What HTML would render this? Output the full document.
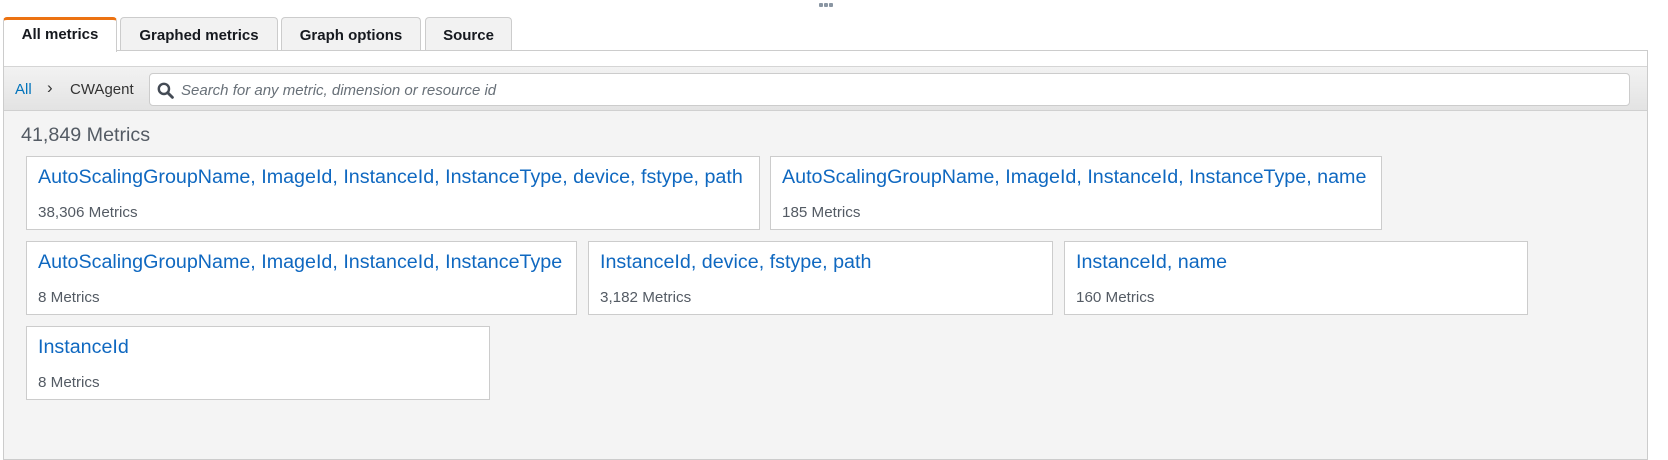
<!DOCTYPE html>
<html><head><meta charset="utf-8"><style>
*{box-sizing:border-box;margin:0;padding:0}
body{width:1668px;height:454px;background:#fff;position:relative;overflow:hidden;font-family:"Liberation Sans",sans-serif;}
.abs{position:absolute}
.dots{left:819px;top:3px;width:14px;height:4px;display:flex;gap:1px}
.dots i{display:block;width:4px;height:4px;background:#8a96a3;border-radius:1px}
.tab{position:absolute;top:17px;height:34px;background:#f2f2f2;border:1px solid #ccc;border-bottom:none;border-radius:4px 4px 0 0;font-weight:bold;font-size:15px;color:#16191f;text-align:center;line-height:31px;padding-top:2px}
.tab.act{background:#fff;border-top:3px solid #ec7211;height:35px;line-height:30px;z-index:2;padding-top:0}
.panel{left:3px;top:50px;width:1645px;height:410px;border:1px solid #ccc;background:#f4f4f4}
.top{position:absolute;left:0;top:0;right:0;height:16px;background:#fff;border-bottom:1px solid #d5d5d5}
.bar{position:absolute;left:0;top:16px;right:0;height:44px;background:linear-gradient(#f2f2f2,#e3e3e3);border-bottom:1px solid #d0d0d0}
.search{position:absolute;left:145px;top:6px;width:1481px;height:33px;background:#fff;border:1px solid #ccc;border-radius:4px}
.card{position:absolute;background:#fff;border:1px solid #ccc;height:74px}
.card .t{position:absolute;left:11px;top:9px;font-size:19.7px;color:#0f68c0;white-space:nowrap}
.card .m{position:absolute;left:11px;top:47px;font-size:15.2px;color:#545b64;white-space:nowrap}
</style></head><body>
<div class="abs dots"><i></i><i></i><i></i></div>
<div class="tab act" style="left:3px;width:114px">All metrics</div>
<div class="tab" style="left:120px;width:158px">Graphed metrics</div>
<div class="tab" style="left:281px;width:140px">Graph options</div>
<div class="tab" style="left:425px;width:87px">Source</div>
<div class="abs panel">
 <div class="top"></div>
 <div class="bar">
  <span class="abs" style="left:11px;top:14px;font-size:15px;color:#0073bb">All</span>
  <span class="abs" style="left:43px;top:11px;font-size:17px;color:#333">&#8250;</span>
  <span class="abs" style="left:66px;top:14px;font-size:15px;color:#333">CWAgent</span>
  <div class="search">
   <svg class="abs" style="left:7px;top:8px" width="17" height="17" viewBox="0 0 16 16"><circle cx="6.5" cy="6.5" r="4.8" fill="none" stroke="#444b55" stroke-width="2.3"/><path d="M10 10 L14.5 14.5" stroke="#444b55" stroke-width="2.7" stroke-linecap="round"/></svg>
   <span class="abs" style="left:31px;top:8px;font-size:15px;font-style:italic;color:#687078">Search for any metric, dimension or resource id</span>
  </div>
 </div>
 <span class="abs" style="left:17px;top:73px;font-size:19.7px;color:#545b64">41,849 Metrics</span>
</div>
<div class="card" style="left:26px;top:156px;width:734px"><span class="t">AutoScalingGroupName, ImageId, InstanceId, InstanceType, device, fstype, path</span><span class="m">38,306 Metrics</span></div>
<div class="card" style="left:770px;top:156px;width:612px"><span class="t">AutoScalingGroupName, ImageId, InstanceId, InstanceType, name</span><span class="m">185 Metrics</span></div>
<div class="card" style="left:26px;top:241px;width:551px"><span class="t">AutoScalingGroupName, ImageId, InstanceId, InstanceType</span><span class="m">8 Metrics</span></div>
<div class="card" style="left:588px;top:241px;width:465px"><span class="t">InstanceId, device, fstype, path</span><span class="m">3,182 Metrics</span></div>
<div class="card" style="left:1064px;top:241px;width:464px"><span class="t">InstanceId, name</span><span class="m">160 Metrics</span></div>
<div class="card" style="left:26px;top:326px;width:464px"><span class="t">InstanceId</span><span class="m">8 Metrics</span></div>
</body></html>
